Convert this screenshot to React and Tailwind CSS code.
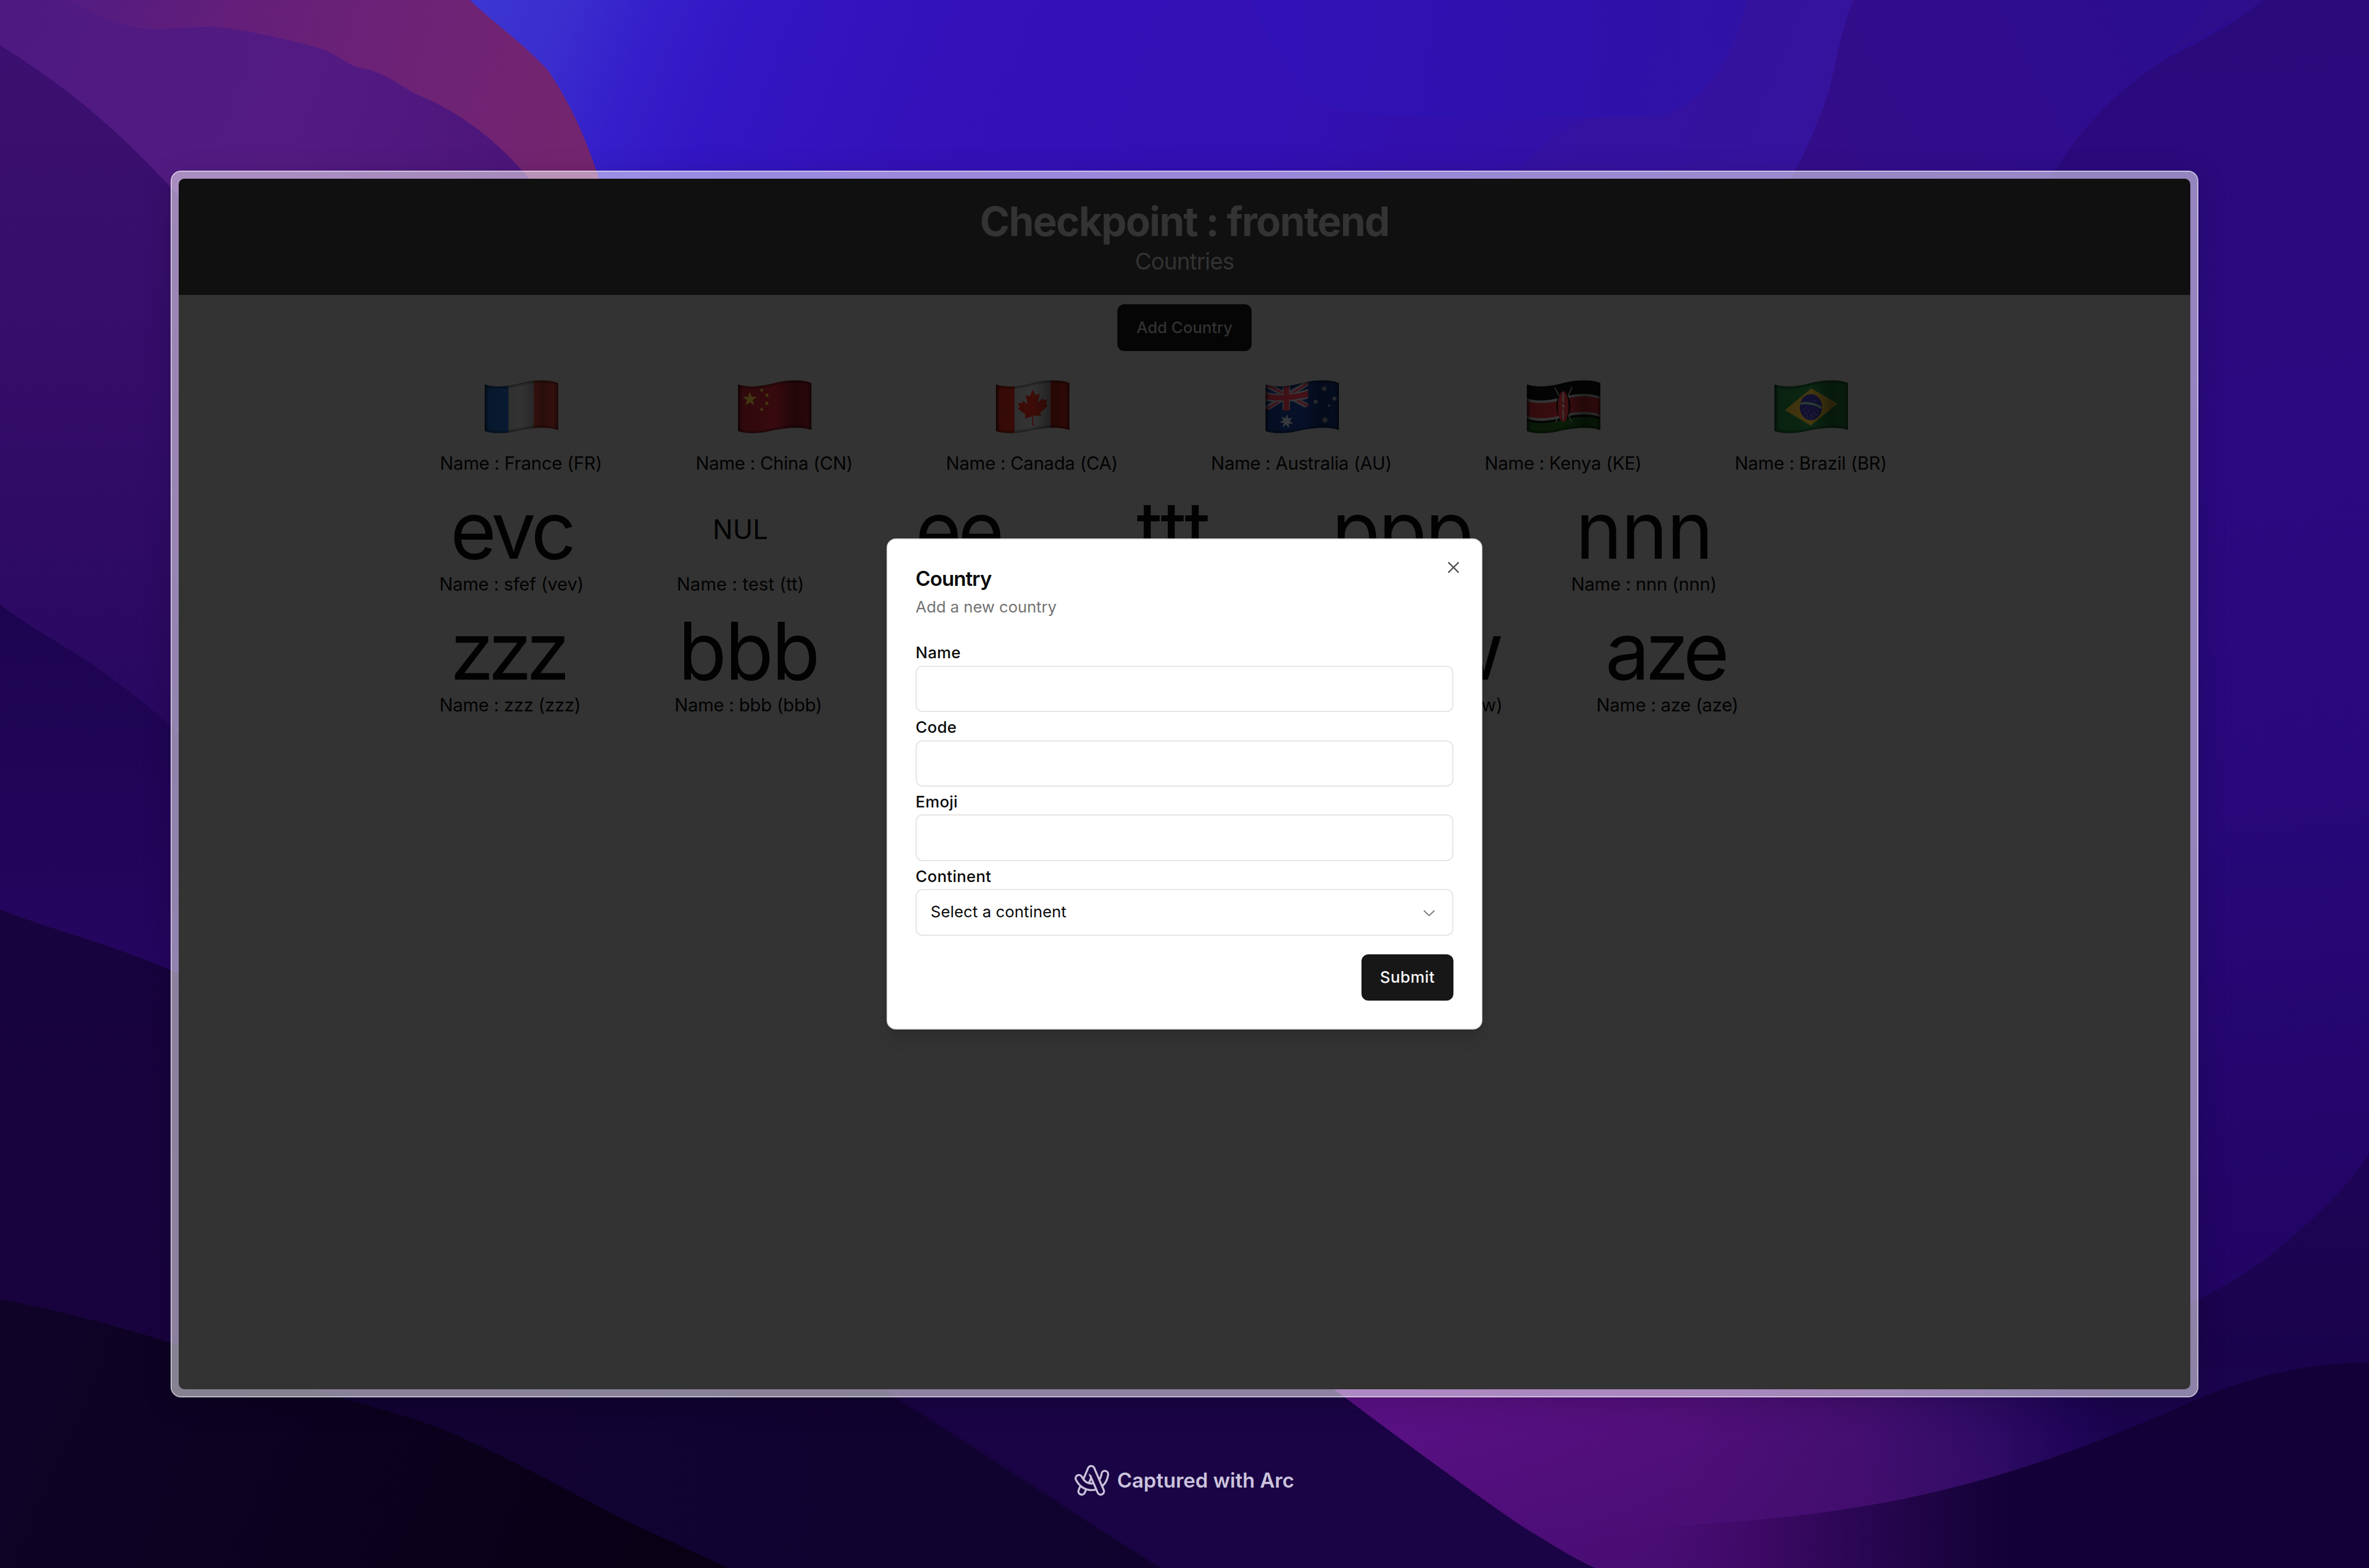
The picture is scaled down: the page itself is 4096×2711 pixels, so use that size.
import React from "react";
import { RxCross2, RxChevronDown } from "react-icons/rx";

const WAVE =
  "M0,26 C62,48 150,42 235,18 C320,-4 415,-8 475,18 V321 C415,297 320,304 235,321 C150,344 62,348 0,327 Z";

function star(cx, cy, r, points = 5, inner = 0.4, turn = 0) {
  const out = [];
  for (let i = 0; i < points * 2; i++) {
    const a = (Math.PI * i) / points - Math.PI / 2 + turn;
    const d = i % 2 ? r * inner : r;
    out.push(`${(cx + d * Math.cos(a)).toFixed(1)},${(cy + d * Math.sin(a)).toFixed(1)}`);
  }
  return out.join(" ");
}

function Flag({ id, children }) {
  return (
    <svg viewBox="-2 -2 479 347" className="h-[93px] w-[129px]">
      <defs>
        <clipPath id={`${id}-clip`}>
          <path d={WAVE} />
        </clipPath>
        <linearGradient id={`${id}-shade`} x1="0" y1="0" x2="1" y2="0">
          <stop offset="0" stopColor="#000" stopOpacity="0.5" />
          <stop offset="0.06" stopColor="#000" stopOpacity="0.15" />
          <stop offset="0.5" stopColor="#000" stopOpacity="0" />
          <stop offset="0.78" stopColor="#000" stopOpacity="0.4" />
          <stop offset="0.93" stopColor="#000" stopOpacity="0.25" />
          <stop offset="1" stopColor="#000" stopOpacity="0.4" />
        </linearGradient>
        <filter id={`${id}-soft`}>
          <feGaussianBlur stdDeviation="7" />
        </filter>
      </defs>
      <g clipPath={`url(#${id}-clip)`}>
        {children}
        <path d={WAVE} fill={`url(#${id}-shade)`} />
        <path
          d={WAVE}
          fill="none"
          stroke="#000"
          strokeOpacity="0.5"
          strokeWidth="18"
          filter={`url(#${id}-soft)`}
        />
      </g>
    </svg>
  );
}

const France = () => (
  <Flag id="fr">
    <rect width="155" height="345" fill="#091c35" />
    <rect x="155" width="163" height="345" fill="#333333" />
    <rect x="318" width="160" height="345" fill="#441512" />
  </Flag>
);

const China = () => (
  <Flag id="cn">
    <rect width="476" height="345" fill="#370a0e" />
    <g fill="#473d12">
      <polygon points={star(77, 122, 49)} />
      <polygon points={star(154, 64, 16, 5, 0.4, 0.4)} />
      <polygon points={star(188, 96, 16, 5, 0.4, 0.2)} />
      <polygon points={star(187, 148, 16, 5, 0.4, 0)} />
      <polygon points={star(154, 188, 16, 5, 0.4, 0.3)} />
    </g>
  </Flag>
);

const Canada = () => (
  <Flag id="ca">
    <rect width="121" height="345" fill="#3e0c08" />
    <rect x="121" width="232" height="345" fill="#343434" />
    <rect x="353" width="124" height="345" fill="#3e0c08" />
    <path
      d="M238,60 L257,98 L282,84 L273,143 L302,115 L309,130 L332,122 L325,155 L336,163 L287,208 L291,228 L242,228 L243,292 L234,292 L236,232 L186,246 L192,222 L141,182 L153,174 L143,146 L167,148 L174,132 L204,154 L193,98 L219,102 Z"
      fill="#3e0c08"
    />
  </Flag>
);

const Australia = () => (
  <Flag id="au">
    <rect width="476" height="345" fill="#061129" />
    <g>
      <path d="M0,26 L276,168 M0,186 L276,14" stroke="#353539" strokeWidth="34" />
      <path d="M0,26 L276,166 M0,190 L276,18" stroke="#48131b" strokeWidth="12" />
      <path d="M111,20 H159 V192 H111 Z" fill="#38383b" />
      <path d="M0,74 C90,100 180,86 276,56 V118 C190,136 90,150 0,132 Z" fill="#38383b" />
      <path d="M0,84 C90,108 180,94 276,68 V106 C190,126 90,140 0,120 Z" fill="#451119" />
      <path d="M118,20 H153 V194 L118,196 Z" fill="#451119" />
      <path d="M0,186 C60,196 100,200 135,197 C190,190 240,178 277,170 V200 L180,260 L0,250 Z" fill="#061129" />
      <path d="M118,180 H153 V194 L118,197 Z" fill="#451119" />
      <path d="M277,0 H330 V220 H277 Z" fill="#061129" />
    </g>
    <g fill="#3c3d40">
      <polygon points={star(136, 265, 46, 7, 0.45, 0.1)} />
      <polygon points={star(379, 54, 22, 7, 0.45)} />
      <polygon points={star(324, 138, 19, 7, 0.45)} />
      <polygon points={star(446, 118, 19, 7, 0.45, 0.2)} />
      <polygon points={star(411, 164, 12, 5, 0.45)} />
      <polygon points={star(384, 256, 25, 7, 0.45)} />
    </g>
  </Flag>
);

const Kenya = () => (
  <Flag id="ke">
    <rect width="476" height="345" fill="#040404" />
    <path d="M0,116 C62,138 150,132 235,106 C320,82 415,80 475,106 V238 C415,212 320,216 235,238 C150,266 62,270 0,246 Z" fill="#383838" />
    <path d="M0,134 C62,154 150,150 235,124 C320,98 415,96 475,122 V222 C415,196 320,200 235,222 C150,248 62,252 0,230 Z" fill="#3b0d0f" />
    <path d="M0,262 C62,282 150,280 235,254 C320,232 415,228 475,252 V345 H0 Z" fill="#0a1d08" />
    <path d="M182,48 L290,270 M292,44 L186,272" stroke="#383838" strokeWidth="6" />
    <ellipse cx="236" cy="166" rx="45" ry="85" fill="#050505" />
    <ellipse cx="235" cy="170" rx="34" ry="100" fill="#421013" />
    <ellipse cx="235" cy="112" rx="5" ry="38" fill="#3a3a3a" />
    <ellipse cx="235" cy="220" rx="5" ry="38" fill="#3a3a3a" />
    <circle cx="235" cy="166" r="9" fill="#3a3a3a" />
  </Flag>
);

const Brazil = () => (
  <Flag id="br">
    <rect width="476" height="345" fill="#0b2713" />
    <polygon points="68,192 238,52 408,150 234,292" fill="#45380f" />
    <ellipse cx="236" cy="173" rx="72" ry="84" fill="#131132" />
    <path d="M168,152 C205,140 275,152 304,180" fill="none" stroke="#2f4039" strokeWidth="13" />
    <g fill="#34343f">
      {[[190,190],[205,215],[222,196],[240,222],[258,205],[270,220],[232,240],[250,236],[212,232],[280,196],[262,132]].map(([x, y]) => (
        <circle key={`${x}-${y}`} cx={x} cy={y} r="3.5" />
      ))}
    </g>
  </Flag>
);

function Country({ width, name, code, nameClass = "", align = "items-center", children }) {
  return (
    <div className={`flex shrink-0 flex-col ${align}`} style={{ width }}>
      <div className="flex h-[145px] justify-center">{children}</div>
      <div className="h-[48px]">
        {name && (
          <p className={`text-[31.2px] leading-[48.3px] tracking-[-0.22px] whitespace-nowrap ${nameClass}`}>
            Name : {name} ({code})
          </p>
        )}
      </div>
    </div>
  );
}

const Big = ({ children, className = "" }) => (
  <span className={`block text-[137px] leading-[151px] whitespace-nowrap ${className}`}>{children}</span>
);

const Fly = ({ children }) => <div className="pt-[25px] pl-[2px]">{children}</div>;

function Field({ label, children }) {
  return (
    <div className="flex flex-col">
      <label className="h-[48.3px] pt-[2px] text-[27.4px] leading-[48.3px] font-medium tracking-[0.35px]">{label}</label>
      {children}
    </div>
  );
}

const Input = () => (
  <input className="h-[80.5px] w-full rounded-[12px] border-2 border-[#e5e5e5] bg-white" />
);

function Wallpaper() {
  return (
    <svg viewBox="0 0 1568 1038" preserveAspectRatio="none" className="absolute inset-0 h-full w-full">
      <defs>
        <linearGradient id="sky" x1="310" y1="0" x2="1130" y2="330" gradientUnits="userSpaceOnUse">
          <stop offset="0" stopColor="#3c36d2" />
          <stop offset="0.07" stopColor="#3b2ece" />
          <stop offset="0.13" stopColor="#351fca" />
          <stop offset="0.2" stopColor="#3316c3" />
          <stop offset="0.36" stopColor="#3411b8" />
          <stop offset="0.6" stopColor="#3210b3" />
          <stop offset="0.8" stopColor="#3310a6" />
          <stop offset="1" stopColor="#36139c" />
        </linearGradient>
        <linearGradient id="blob" x1="830" y1="0" x2="1155" y2="0" gradientUnits="userSpaceOnUse">
          <stop offset="0" stopColor="#3012b8" />
          <stop offset="1" stopColor="#2d12a8" />
        </linearGradient>
        <linearGradient id="ridge" x1="1200" y1="120" x2="1450" y2="0" gradientUnits="userSpaceOnUse">
          <stop offset="0" stopColor="#330d89" />
          <stop offset="1" stopColor="#2c0d90" />
        </linearGradient>
        <linearGradient id="east" x1="1400" y1="0" x2="1500" y2="900" gradientUnits="userSpaceOnUse">
          <stop offset="0" stopColor="#2b0a7c" />
          <stop offset="0.35" stopColor="#2b0980" />
          <stop offset="0.6" stopColor="#28087a" />
          <stop offset="1" stopColor="#210460" />
        </linearGradient>
        <linearGradient id="eastLow" x1="0" y1="770" x2="0" y2="930" gradientUnits="userSpaceOnUse">
          <stop offset="0" stopColor="#1f0456" />
          <stop offset="1" stopColor="#19034a" />
        </linearGradient>
        <linearGradient id="violet" x1="0" y1="0" x2="340" y2="120" gradientUnits="userSpaceOnUse">
          <stop offset="0" stopColor="#4e1a82" />
          <stop offset="0.6" stopColor="#531b82" />
          <stop offset="1" stopColor="#4c157a" />
        </linearGradient>
        <linearGradient id="rose" x1="40" y1="0" x2="380" y2="90" gradientUnits="userSpaceOnUse">
          <stop offset="0" stopColor="#521b82" />
          <stop offset="0.35" stopColor="#651f79" />
          <stop offset="0.65" stopColor="#6d2276" />
          <stop offset="1" stopColor="#74256f" />
        </linearGradient>
        <linearGradient id="west" x1="0" y1="30" x2="0" y2="480" gradientUnits="userSpaceOnUse">
          <stop offset="0" stopColor="#3c1070" />
          <stop offset="0.5" stopColor="#340d69" />
          <stop offset="1" stopColor="#280860" />
        </linearGradient>
        <linearGradient id="westMid" x1="0" y1="400" x2="0" y2="650" gradientUnits="userSpaceOnUse">
          <stop offset="0" stopColor="#1d0450" />
          <stop offset="1" stopColor="#250660" />
        </linearGradient>
        <linearGradient id="westLow" x1="0" y1="602" x2="60" y2="900" gradientUnits="userSpaceOnUse">
          <stop offset="0" stopColor="#17033e" />
          <stop offset="1" stopColor="#19033f" />
        </linearGradient>
        <linearGradient id="south" x1="0" y1="860" x2="420" y2="1038" gradientUnits="userSpaceOnUse">
          <stop offset="0" stopColor="#0f0328" />
          <stop offset="0.5" stopColor="#0c0220" />
          <stop offset="1" stopColor="#080015" />
        </linearGradient>
        <linearGradient id="southMid" x1="240" y1="0" x2="760" y2="0" gradientUnits="userSpaceOnUse">
          <stop offset="0" stopColor="#120334" />
          <stop offset="1" stopColor="#0f032e" />
        </linearGradient>
        <linearGradient id="magenta" x1="930" y1="980" x2="1400" y2="930" gradientUnits="userSpaceOnUse">
          <stop offset="0" stopColor="#5c1186" />
          <stop offset="0.4" stopColor="#53107c" />
          <stop offset="0.65" stopColor="#430f70" />
          <stop offset="0.8" stopColor="#300c66" />
          <stop offset="0.93" stopColor="#200558" />
          <stop offset="1" stopColor="#1b044e" />
        </linearGradient>
        <linearGradient id="magentaFade" x1="0" y1="920" x2="0" y2="1038" gradientUnits="userSpaceOnUse">
          <stop offset="0" stopColor="#3c0a68" stopOpacity="0" />
          <stop offset="1" stopColor="#3c0a68" stopOpacity="0.5" />
        </linearGradient>
        <linearGradient id="hill" x1="1080" y1="0" x2="1330" y2="0" gradientUnits="userSpaceOnUse">
          <stop offset="0" stopColor="#460b70" stopOpacity="0" />
          <stop offset="0.35" stopColor="#3c0964" />
          <stop offset="0.62" stopColor="#290652" />
          <stop offset="0.85" stopColor="#1a033f" />
          <stop offset="1" stopColor="#140038" />
        </linearGradient>
      </defs>
      <rect width="1568" height="1038" fill="#18033f" />
      <rect width="1568" height="500" fill="url(#sky)" />
      <path d="M1000,118 C1018,100 1032,84 1052,78 C1090,72 1115,78 1130,60 C1145,44 1152,20 1156,0 H1240 V130 H1000 Z" fill="#37149c" fillOpacity="0.55" />
      <path d="M828,0 C845,40 862,66 884,72 C930,82 1050,78 1100,77 C1130,68 1150,30 1156,0 Z" fill="url(#blob)" fillOpacity="0.7" />
      <path d="M1227,0 C1218,20 1216,40 1210,62 C1202,84 1194,104 1184,120 H1568 V0 Z" fill="url(#ridge)" />
      <path d="M1463,0 C1455,14 1446,26 1432,38 L1500,0 Z" fill="#2e0e8a" />
      <path d="M1498,0 C1484,12 1460,26 1437,37 C1405,56 1375,86 1356,120 V960 H1568 V0 Z" fill="url(#east)" />
      <path d="M1568,764 C1553,786 1535,804 1510,825 C1490,841 1475,851 1440,868 V960 H1568 Z" fill="url(#eastLow)" />
      <path d="M0,0 H311 C330,18 348,30 363,47 C380,72 390,98 397,120 V140 H0 Z" fill="url(#rose)" />
      <path d="M0,0 H44 C60,8 74,17 97,19 C112,20 128,17 145,18 C166,20 198,28 215,33 C226,38 232,44 239,45 C256,48 266,58 277,63 C304,74 328,92 350,118 L360,140 H0 Z" fill="url(#violet)" />
      <path d="M0,30 C45,58 82,88 130,143 V500 H0 Z" fill="url(#west)" />
      <path d="M0,400 C30,424 75,440 130,498 V660 H0 Z" fill="url(#westMid)" />
      <path d="M0,602 C40,618 80,626 130,650 V930 H0 Z" fill="url(#westLow)" />
      <path d="M560,905 C640,950 710,1002 770,1038 H1060 V905 Z" fill="#1a0445" />
      <path d="M150,905 H560 C640,955 710,1002 768,1038 H150 Z" fill="url(#southMid)" />
      <path d="M0,860 C36,867 76,877 113,889 L221,924 C250,932 272,938 295,947 C316,956 336,966 354,975 L413,1006 L482,1038 H0 Z" fill="url(#south)" />
      <path d="M870,910 C930,955 980,992 1010,1012 C1030,1024 1042,1032 1056,1038 H1568 V905 Z" fill="url(#magenta)" />
      <path d="M870,910 C930,955 980,992 1010,1012 C1030,1024 1042,1032 1056,1038 H1330 V905 Z" fill="url(#magentaFade)" />
      <path d="M1080,1012 C1150,1008 1200,1004 1256,993 C1330,978 1380,958 1437,934 C1480,914 1520,902 1568,902 V1038 H1080 Z" fill="url(#hill)" />
    </svg>
  );
}

function ArcLogo() {
  return (
    <svg viewBox="108 74 209 186" className="h-[53.5px] w-[60px]">
      <mask id="arc" maskUnits="userSpaceOnUse" x="100" y="60" width="230" height="210">
        <g fill="none" strokeLinecap="round" strokeLinejoin="round">
          <path d="M208,100 L151,232" stroke="#fff" strokeWidth="52" />
          <path d="M208,100 L151,232" stroke="#000" strokeWidth="28" />
          <path d="M134,154 C150,186 178,205 210,205 C252,204 284,176 290,129" stroke="#fff" strokeWidth="52" />
          <path d="M134,154 C150,186 178,205 210,205 C252,204 284,176 290,129" stroke="#000" strokeWidth="28" />
          <path d="M208,100 L265,232" stroke="#fff" strokeWidth="52" />
          <path d="M208,100 L265,232" stroke="#000" strokeWidth="28" />
          <path d="M208,100 L196,128" stroke="#000" strokeWidth="28" strokeLinecap="butt" />
        </g>
      </mask>
      <rect x="100" y="60" width="230" height="210" fill="#cbc3dc" mask="url(#arc)" />
    </svg>
  );
}

export default function App() {
  return (
    <div className="relative flex h-[2711px] w-[4096px] flex-col items-center overflow-hidden bg-[#18033f] pt-[295px] font-[Inter,sans-serif]">
      <Wallpaper />
      <main className="relative h-[2120.5px] w-[3505.5px] shrink-0 rounded-[18px] border-2 border-white/75 bg-white/50 bg-clip-padding p-[12px] shadow-[0_10px_50px_rgba(0,0,0,0.18)]">
        <div className="relative h-full w-full overflow-hidden rounded-[10px] bg-[#333333] text-[#020202]">
          <header className="flex h-[201px] flex-col items-center bg-[#101010] pt-[34px] text-[#333333]">
            <h1 className="text-[70px] leading-[80.5px] font-bold tracking-[-1.85px]">Checkpoint : frontend</h1>
            <p className="text-[39px] leading-[56px] tracking-[-0.85px]">Countries</p>
          </header>
          <div className="flex justify-center pt-[16px]">
            <button className="h-[80.5px] w-[232px] rounded-[12px] bg-[#050505] text-[27.4px] font-medium text-[#323232]">
              Add Country
            </button>
          </div>
          <section className="flex flex-col gap-[16px] pt-[25.5px] pl-[450.6px]">
            <div className="flex gap-[161px]">
              <Country width={281.8} name="France" code="FR"><Fly><France /></Fly></Country>
              <Country width={271.9} name="China" code="CN"><Fly><China /></Fly></Country>
              <Country width={297.2} name="Canada" code="CA"><Fly><Canada /></Fly></Country>
              <Country width={312.9} name="Australia" code="AU"><Fly><Australia /></Fly></Country>
              <Country width={270.2} name="Kenya" code="KE"><Fly><Kenya /></Fly></Country>
              <Country width={264} name="Brazil" code="BR"><Fly><Brazil /></Fly></Country>
            </div>
            <div className="flex gap-[161px]">
              <Country width={248.9} name="sfef" code="vev"><Big className="tracking-[-6px]">evc</Big></Country>
              <Country width={221} name="test" code="tt" nameClass="tracking-[0.1px]">
                <span className="block pt-[46px] text-[46px] leading-[56px] tracking-[0.4px]">NUL</span>
              </Country>
              <Country width={215.6}><Big className="mr-[6px] tracking-[-6px]">ee</Big></Country>
              <Country width={203}><Big className="mr-[2px] tracking-[0px]">ttt</Big></Country>
              <Country width={263}><Big className="tracking-[-3px]">ppp</Big></Country>
              <Country width={252} name="nnn" code="nnn"><Big className="tracking-[-2px]">nnn</Big></Country>
            </div>
            <div className="flex gap-[161px]">
              <Country width={244} name="zzz" code="zzz"><Big className="mr-[10px] tracking-[-10px]">zzz</Big></Country>
              <Country width={258} name="bbb" code="bbb"><Big className="tracking-[-3px]">bbb</Big></Country>
              <div className="w-[560px] shrink-0" />
              <Country width={293} name="www" code="www" align="items-end"><Big className="pr-[4px] tracking-[-6px]">www</Big></Country>
              <Country width={248} name="aze" code="aze"><Big className="mr-[8px] tracking-[-8px]">aze</Big></Country>
            </div>
          </section>

          <div className="absolute inset-0 grid place-items-center">
            <div className="relative flex h-[848.5px] w-[1030.4px] flex-col rounded-[16px] border-2 border-[#e5e5e5] bg-white px-[48.3px] pt-[48.3px] text-[#0a0a0a] shadow-[0_20px_30px_-6px_rgba(0,0,0,0.12),0_8px_12px_-8px_rgba(0,0,0,0.12)]">
              <h2 className="text-[35.1px] leading-[38px] font-semibold tracking-[-0.95px]">Country</h2>
              <p className="mt-[11px] text-[27.3px] leading-[40px] text-[#737373]">Add a new country</p>
              <form className="mt-[32.2px] flex flex-col">
                <Field label="Name"><Input /></Field>
                <Field label="Code"><Input /></Field>
                <Field label="Emoji"><Input /></Field>
                <Field label="Continent">
                  <div className="flex h-[80.5px] items-center justify-between rounded-[12px] border-2 border-[#e5e5e5] px-[24px] text-[27.4px] tracking-[0.12px]">
                    <span className="-mt-px">Select a continent</span>
                    <RxChevronDown className="h-[32px] w-[32px] opacity-50" />
                  </div>
                </Field>
                <button className="mt-[32.2px] h-[80.5px] w-[159px] self-end rounded-[12px] bg-[#171717] pb-px text-[27.4px] font-medium tracking-[0.5px] text-[#fafafa]">
                  Submit
                </button>
              </form>
              <RxCross2 className="absolute top-[32.2px] right-[32.2px] h-[32.2px] w-[32.2px] opacity-70" />
            </div>
          </div>
        </div>
      </main>
      <footer className="relative mt-[117px] flex items-center gap-[13px] text-[#cbc3dc]">
        <ArcLogo />
        <span className="pb-px text-[35px] leading-[48px] font-semibold">Captured with Arc</span>
      </footer>
    </div>
  );
}
